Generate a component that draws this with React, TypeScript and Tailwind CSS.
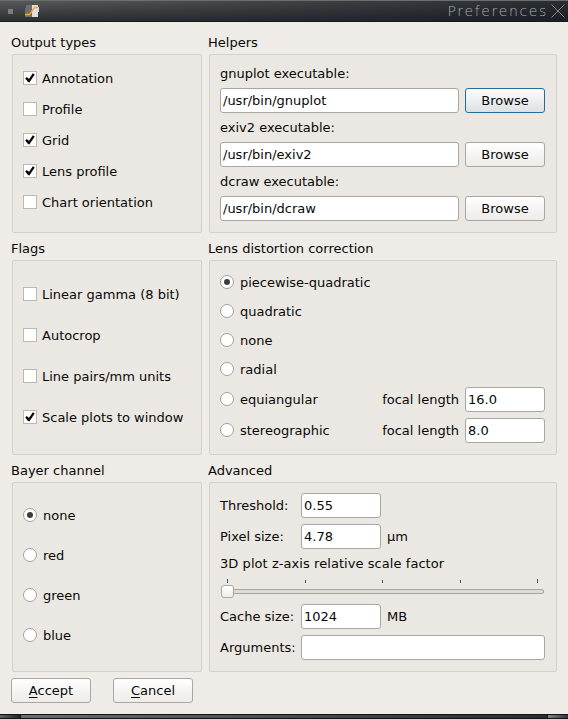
import React from "react";

function Section({ title, height, children }: { title: string; height: string; children: React.ReactNode }) {
  return (
    <section className="flex flex-col">
      <h2 className="-ml-px h-4 leading-[18px]">{title}</h2>
      <div className={`mt-1 rounded-[2px] border border-[#d4d1cd] bg-[#ebe8e3] px-[10px] ${height}`}>{children}</div>
    </section>
  );
}

function CheckRow({ label, checked = false }: { label: string; checked?: boolean }) {
  return (
    <div className="flex h-4 items-start gap-[5px]">
      <span className="mt-px flex size-[14px] shrink-0 border border-[#bcb9b5] bg-white">
        {checked && (
          <svg width="12" height="12" viewBox="0 0 12 12" fill="none" stroke="#080808" strokeWidth="2.3">
            <path d="M2 5.8 L5 9 L9.8 1.8" />
            <path d="M3 6.5 L5 9.4" />
          </svg>
        )}
      </span>
      <span className="leading-[18px]">{label}</span>
    </div>
  );
}

function RadioRow({ label, checked = false }: { label: string; checked?: boolean }) {
  return (
    <div className="flex h-4 items-start gap-[6px]">
      <span className="mt-px flex size-[14px] shrink-0 items-center justify-center rounded-full border border-[#a3a09d] bg-white">
        {checked && <span className="size-[6px] rounded-full bg-[#3c3c3c]" />}
      </span>
      <span className="leading-[18px]">{label}</span>
    </div>
  );
}

function Field({ value, width }: { value: string; width: string }) {
  return (
    <div className={`h-[25px] shrink-0 rounded-[3px] border border-[#a9a6a3] bg-white pl-[2px] leading-[23px] ${width}`}>
      {value}
    </div>
  );
}

function Button({ children, focused = false }: { children: React.ReactNode; focused?: boolean }) {
  return (
    <button
      className={`h-[25px] w-20 shrink-0 rounded-[3px] border bg-linear-to-b text-center leading-[23px] ${
        focused ? "border-[#266c99] from-[#fdfdfd] to-[#dce1e4]" : "border-[#a9a6a3] from-[#ffffff] to-[#eeebe8]"
      }`}
    >
      {children}
    </button>
  );
}

function Helper({ name, path, focused = false }: { name: string; path: string; focused?: boolean }) {
  return (
    <div>
      <div className="h-4 leading-[18px]">{name} executable:</div>
      <div className="mt-[7px] flex gap-[6px]">
        <Field value={path} width="w-[239px]" />
        <Button focused={focused}>Browse</Button>
      </div>
    </div>
  );
}

function FocalRow({ label, value }: { label: string; value: string }) {
  return (
    <div className="flex h-[25px] items-start justify-between">
      <div className="pt-1">
        <RadioRow label={label} />
      </div>
      <div className="flex items-center gap-[6px]">
        <span>focal length</span>
        <Field value={value} width="w-20" />
      </div>
    </div>
  );
}

function LabeledField({ label, value, unit, width = "w-20" }: { label: string; value: string; unit?: string; width?: string }) {
  return (
    <div className="flex h-[25px] items-center">
      <span className="w-[81px] shrink-0">{label}</span>
      <Field value={value} width={width} />
      {unit && <span className="ml-[6px]">{unit}</span>}
    </div>
  );
}

function ScaleSlider() {
  return (
    <div className="flex h-[33px] flex-col">
      <div className="mt-2 flex h-1 w-[311px] items-end justify-between pl-[7px]">
        <i className="h-1 w-px bg-[#266088]" />
        <i className="h-[3px] w-px bg-[#266088]" />
        <i className="h-[3px] w-px bg-[#266088]" />
        <i className="h-[3px] w-px bg-[#266088]" />
        <i className="-mr-[7px] h-1 w-px bg-[#266088]" />
      </div>
      <div className="relative mt-[6px] ml-1 h-[5px] w-[320px] rounded-[2px] border border-[#a9a6a3] bg-[#dedbd7]">
        <div className="absolute -top-[5px] -left-[4px] size-[13px] rounded-[3px] border border-[#a9a6a3] bg-linear-to-b from-white to-[#f0eeeb]" />
      </div>
    </div>
  );
}

export default function App() {
  return (
    <div className="flex h-[719px] w-[568px] flex-col overflow-hidden bg-[#efece7] font-['DejaVu_Sans',sans-serif] text-[13px] leading-4 text-[#080808]">
      <header className="flex h-[22px] shrink-0 items-center border-t border-b border-t-[#6c6e6e] border-b-[#17191b] bg-linear-to-b from-[#585a5a] to-[#2c2f33]">
        <div className="flex h-full w-full items-center bg-linear-to-r from-transparent to-[#11161ca6]">
          <span className="ml-2 size-[5px] bg-[#7b7d7f]" />
          <svg className="ml-3" width="14" height="12" viewBox="0 0 14 12">
            <path d="M1 0h6v12H0V3h1z" fill="#6e6e6e" />
            <path d="M7 0h6v2h1v5h-1v5H7z" fill="#dedede" />
            <path d="M0 9.5h4.5L9.5 2.5h4" fill="none" stroke="#fba531" strokeWidth="1.3" />
          </svg>
          <span className="ml-auto font-['DejaVu_Sans'] text-[14px] font-extralight tracking-[1.65px] text-[#aaadaf]">
            Preferences
          </span>
          <svg className="mr-[3px] ml-[3px]" width="14" height="14" viewBox="0 0 14 14" stroke="#85888b" strokeWidth="1">
            <path d="M.5 .5l13 13M13.5 .5l-13 13" />
          </svg>
        </div>
      </header>

      <main className="flex h-[650px] shrink-0 gap-[7px] pt-3 pl-3">
        <div className="flex w-[190px] flex-col gap-[7px]">
          <Section title="Output types" height="h-[179px]">
            <div className="flex flex-col gap-[15px] pt-[15px]">
              <CheckRow label="Annotation" checked />
              <CheckRow label="Profile" />
              <CheckRow label="Grid" checked />
              <CheckRow label="Lens profile" checked />
              <CheckRow label="Chart orientation" />
            </div>
          </Section>
          <Section title="Flags" height="h-[195px]">
            <div className="flex flex-col gap-[25px] pt-[25px]">
              <CheckRow label="Linear gamma (8 bit)" />
              <CheckRow label="Autocrop" />
              <CheckRow label="Line pairs/mm units" />
              <CheckRow label="Scale plots to window" checked />
            </div>
          </Section>
          <Section title="Bayer channel" height="h-[190px]">
            <div className="flex flex-col gap-6 pt-6">
              <RadioRow label="none" checked />
              <RadioRow label="red" />
              <RadioRow label="green" />
              <RadioRow label="blue" />
            </div>
          </Section>
        </div>

        <div className="flex w-[348px] flex-col gap-[7px]">
          <Section title="Helpers" height="h-[179px]">
            <div className="flex flex-col gap-[6px] pt-[10px]">
              <Helper name="gnuplot" path="/usr/bin/gnuplot" focused />
              <Helper name="exiv2" path="/usr/bin/exiv2" />
              <Helper name="dcraw" path="/usr/bin/dcraw" />
            </div>
          </Section>
          <Section title="Lens distortion correction" height="h-[195px]">
            <div className="w-[325px] pt-[13px]">
              <div className="flex flex-col gap-[13px]">
                <RadioRow label="piecewise-quadratic" checked />
                <RadioRow label="quadratic" />
                <RadioRow label="none" />
                <RadioRow label="radial" />
              </div>
              <div className="mt-[10px] flex flex-col gap-[6px]">
                <FocalRow label="equiangular" value="16.0" />
                <FocalRow label="stereographic" value="8.0" />
              </div>
            </div>
          </Section>
          <Section title="Advanced" height="h-[190px]">
            <div className="flex flex-col gap-[6px] pt-[10px]">
              <LabeledField label="Threshold:" value="0.55" />
              <LabeledField label="Pixel size:" value="4.78" unit="µm" />
              <div>
                <div className="h-4 leading-[18px] tracking-[0.06px]">3D plot z-axis relative scale factor</div>
                <ScaleSlider />
                <LabeledField label="Cache size:" value="1024" unit="MB" />
              </div>
              <LabeledField label="Arguments:" value="" width="w-[244px]" />
            </div>
          </Section>
        </div>
      </main>

      <footer className="flex flex-1 gap-[22px] pt-[6px] pl-[11px]">
        <Button>
          <span className="underline underline-offset-2">A</span>ccept
        </Button>
        <Button>
          <span className="underline underline-offset-2">C</span>ancel
        </Button>
      </footer>

      <div className="flex h-[5px] shrink-0 border-t border-b border-t-[#111315] border-b-[#111315]">
        <div className="w-[21px] border-r border-[#111315] bg-linear-to-r from-[#606262] to-[#202225]" />
        <div className="flex-1 bg-linear-to-r from-[#6a6d6f] to-[#2b2d33]" />
        <div className="w-[21px] border-l border-[#111315] bg-linear-to-r from-[#808283] to-[#303236]" />
      </div>
    </div>
  );
}
